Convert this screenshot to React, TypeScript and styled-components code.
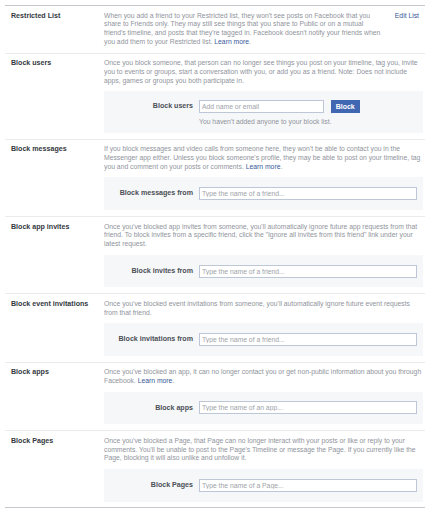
import React from "react";
import styled, { createGlobalStyle } from "styled-components";

const GlobalStyle = createGlobalStyle`
  html, body {
    margin: 0;
    padding: 0;
    background: #ffffff;
  }
  body {
    font-family: "Liberation Sans", Arial, Helvetica, sans-serif;
    font-size: 6.8px;
    line-height: 8.8px;
    color: #1d2129;
  }
  * { box-sizing: border-box; }
`;

const Panel = styled.div`
  margin: 5px 5px 0 5px;
  width: 420px;
  border-top: 1px solid #c4c7cc;
  border-bottom: 1px solid #c4c7cc;
`;

const Section = styled.section`
  display: grid;
  grid-template-columns: 99px 1fr;
  padding: 5.5px 2px 6px 0;
  & + & {
    border-top: 1px solid #e9ebee;
  }
  &:last-child {
    padding-bottom: 5.5px;
  }
`;

const Title = styled.div`
  padding-left: 6px;
  font-weight: bold;
  font-size: 7.1px;
  color: #333840;
`;

const Body = styled.div`
  min-width: 0;
`;

const TopRow = styled.div`
  display: flex;
  justify-content: space-between;
  align-items: flex-start;
`;

const Description = styled.div<{ $width?: number }>`
  color: #90949c;
  width: ${(p) => (p.$width ? `${p.$width}px` : "auto")};
`;

const Link = styled.a`
  color: #365899;
  text-decoration: none;
  cursor: pointer;
`;

const EditLink = styled(Link)`
  padding-right: 4px;
`;

const Box = styled.div`
  margin-top: 5.7px;
  background: #f6f7f9;
  display: grid;
  grid-template-columns: 89px 1fr;
  column-gap: 6px;
  align-items: center;
  padding: 9.8px 6.3px 9.9px 0;
`;

const BoxWithNote = styled(Box)`
  padding-top: 9px;
  padding-bottom: 6px;
  row-gap: 4.8px;
`;

const FieldLabel = styled.label`
  text-align: right;
  font-weight: bold;
  font-size: 7.1px;
  white-space: nowrap;
  color: #4b4f56;
`;

const Field = styled.div`
  display: flex;
  align-items: center;
`;

const Input = styled.input<{ $width?: number }>`
  height: 13px;
  width: ${(p) => (p.$width ? `${p.$width}px` : "100%")};
  border: 1px solid #bdc7d8;
  background: #fff;
  font-family: inherit;
  font-size: 6.8px;
  padding: 0 2px;
  margin: 0;
  outline: none;
  color: #1d2129;
  &::placeholder {
    color: #a0a3a9;
  }
`;

const Button = styled.button`
  height: 13px;
  margin-left: 6.7px;
  padding: 0 4px;
  border: 1px solid #4267b2;
  background: #4267b2;
  color: #fff;
  font-family: inherit;
  font-weight: bold;
  font-size: 7px;
  line-height: 11px;
  cursor: pointer;
`;

const Note = styled.div`
  grid-column: 2;
  color: #90949c;
`;

type Item = {
  title: string;
  text: string;
  learn?: boolean;
  field?: string;
  placeholder?: string;
};

const items: Item[] = [
  {
    title: "Block messages",
    text:
      "If you block messages and video calls from someone here, they won't be able to contact you in the Messenger app either. Unless you block someone's profile, they may be able to post on your timeline, tag you and comment on your posts or comments.",
    learn: true,
    field: "Block messages from",
    placeholder: "Type the name of a friend...",
  },
  {
    title: "Block app invites",
    text:
      "Once you've blocked app invites from someone, you'll automatically ignore future app requests from that friend. To block invites from a specific friend, click the \"Ignore all invites from this friend\" link under your latest request.",
    field: "Block invites from",
    placeholder: "Type the name of a friend...",
  },
  {
    title: "Block event invitations",
    text:
      "Once you've blocked event invitations from someone, you'll automatically ignore future event requests from that friend.",
    field: "Block invitations from",
    placeholder: "Type the name of a friend...",
  },
  {
    title: "Block apps",
    text:
      "Once you've blocked an app, it can no longer contact you or get non-public information about you through Facebook.",
    learn: true,
    field: "Block apps",
    placeholder: "Type the name of an app...",
  },
  {
    title: "Block Pages",
    text:
      "Once you've blocked a Page, that Page can no longer interact with your posts or like or reply to your comments. You'll be unable to post to the Page's Timeline or message the Page. If you currently like the Page, blocking it will also unlike and unfollow it.",
    field: "Block Pages",
    placeholder: "Type the name of a Page...",
  },
];

export default function App() {
  return (
    <>
      <GlobalStyle />
      <Panel>
        <Section>
          <Title>Restricted List</Title>
          <Body>
            <TopRow>
              <Description $width={280}>
                When you add a friend to your Restricted list, they won't see posts on Facebook that you
                share to Friends only. They may still see things that you share to Public or on a mutual
                friend's timeline, and posts that they're tagged in. Facebook doesn't notify your friends
                when you add them to your Restricted list. <Link>Learn more</Link>.
              </Description>
              <EditLink>Edit List</EditLink>
            </TopRow>
          </Body>
        </Section>
        <Section>
          <Title>Block users</Title>
          <Body>
            <Description>
              Once you block someone, that person can no longer see things you post on your timeline, tag
              you, invite you to events or groups, start a conversation with you, or add you as a friend.
              Note: Does not include apps, games or groups you both participate in.
            </Description>
            <BoxWithNote>
              <FieldLabel>Block users</FieldLabel>
              <Field>
                <Input $width={125} placeholder="Add name or email" />
                <Button>Block</Button>
              </Field>
              <Note>You haven't added anyone to your block list.</Note>
            </BoxWithNote>
          </Body>
        </Section>
        {items.map((it) => (
          <Section key={it.title}>
            <Title>{it.title}</Title>
            <Body>
              <Description>
                {it.text}
                {it.learn ? (
                  <>
                    {" "}
                    <Link>Learn more</Link>.
                  </>
                ) : null}
              </Description>
              <Box>
                <FieldLabel>{it.field}</FieldLabel>
                <Field>
                  <Input placeholder={it.placeholder} />
                </Field>
              </Box>
            </Body>
          </Section>
        ))}
      </Panel>
    </>
  );
}
